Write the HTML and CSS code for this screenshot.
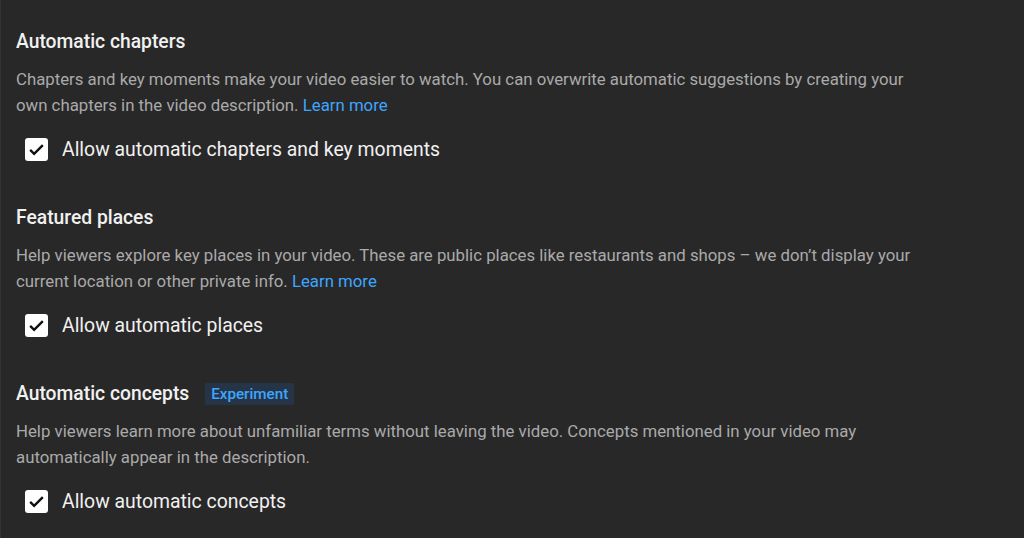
FILE: index.html
```html
<!DOCTYPE html>
<html lang="en">
<head>
    <meta charset="UTF-8">
    <meta name="viewport" content="width=device-width, initial-scale=1.0">
    <title>Video details</title>
    <link rel="stylesheet" href="styles.css">
</head>
<body>
    <div class="panel">
        <div class="section">
            <h2 class="title">Automatic chapters</h2>
            <p class="desc">Chapters and key moments make your video easier to watch. You can overwrite automatic suggestions by creating your own chapters in the video description. <a href="#">Learn more</a></p>
            <label class="check">
                <span class="box"><svg viewBox="0 0 24 24"><path d="M4 12.5l5 5L20 6.5"/></svg></span>
                Allow automatic chapters and key moments
            </label>
        </div>

        <div class="section">
            <h2 class="title">Featured places</h2>
            <p class="desc">Help viewers explore key places in your video. These are public places like restaurants and shops – we don’t display your current location or other private info. <a href="#">Learn more</a></p>
            <label class="check">
                <span class="box"><svg viewBox="0 0 24 24"><path d="M4 12.5l5 5L20 6.5"/></svg></span>
                Allow automatic places
            </label>
        </div>

        <div class="section">
            <h2 class="title">Automatic concepts <span class="chip">Experiment</span></h2>
            <p class="desc">Help viewers learn more about unfamiliar terms without leaving the video. Concepts mentioned in your video may automatically appear in the description.</p>
            <label class="check">
                <span class="box"><svg viewBox="0 0 24 24"><path d="M4 12.5l5 5L20 6.5"/></svg></span>
                Allow automatic concepts
            </label>
        </div>
    </div>
</body>
</html>
```

FILE: styles.css
```css
html, body {
    margin: 0;
    height: 100%;
}
body {
    font-family: Roboto, "Noto Sans", Arial, sans-serif;
    background-color: #282828;
    color: #f1f1f1;
    overflow: hidden;
}
.panel {
    padding: 29px 16px 0 15px;
    border-left: 1px solid #333;
}
.section {
    height: 176px;
}
.title {
    margin: 0;
    font-size: 19.3px;
    font-weight: 500;
    line-height: 26px;
    display: flex;
    align-items: center;
}
.chip {
    margin-left: 16px;
    background-color: #253547;
    color: #3ea6ff;
    font-size: 15.2px;
    font-weight: 500;
    padding: 1px 6px;
    border-radius: 2px;
    line-height: 20px;
}
.desc {
    margin: 11px 0 0 0;
    max-width: 905px;
    color: #aaaaaa;
    font-size: 16.8px;
    line-height: 26px;
}
.desc a {
    color: #3ea6ff;
    text-decoration: none;
}
.check {
    display: flex;
    align-items: center;
    gap: 14px;
    margin: 20px 0 0 9px;
    font-size: 19.4px;
    color: #f1f1f1;
}
.box {
    width: 23px;
    height: 23px;
    background-color: #fff;
    border-radius: 3px;
    display: flex;
    align-items: center;
    justify-content: center;
}
.box svg {
    width: 19px;
    height: 19px;
    fill: none;
    stroke: #0f0f0f;
    stroke-width: 3;
}
```
